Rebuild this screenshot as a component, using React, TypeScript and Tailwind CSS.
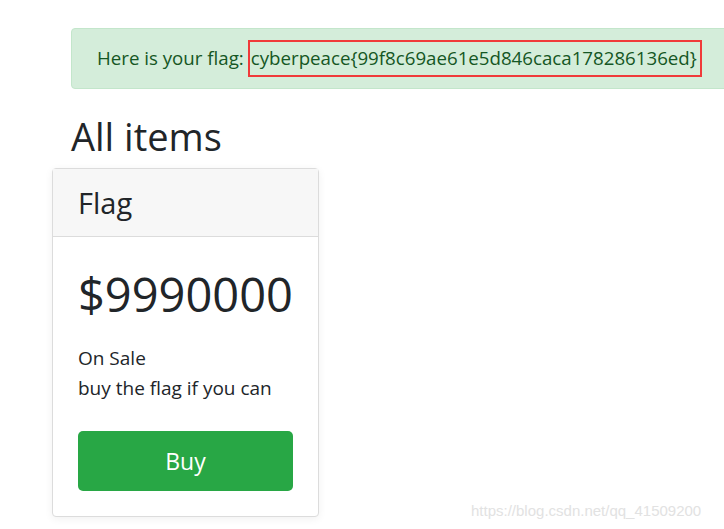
export default function App() {
  return (
    <div className="relative h-[529px] w-[724px] overflow-hidden bg-white font-['Open_Sans',sans-serif] text-[#212529]">
      <div className="pl-[71px] pt-[28px]">
        <div className="flex h-[61px] w-[700px] items-center rounded-[4px] border border-[#c3e6cb] bg-[#d4edda] pl-[25px] text-[18.7px] text-[#155724]">
          <span>Here is your flag:</span>
          <span className="ml-[4px] flex h-[37px] items-center border-2 border-[#f03a3a] pl-[1px] pr-[3px]">
            cyberpeace{"{"}99f8c69ae61e5d846caca178286136ed{"}"}
          </span>
        </div>
        <h2 className="mt-[24px] text-[38px] leading-[46px]">All items</h2>
      </div>
      <div className="ml-[52px] mt-[9px] w-[267px] rounded-[4px] border border-[#dcdcdc] bg-white shadow-[0_2px_8px_rgba(0,0,0,0.06)]">
        <div className="flex h-[68px] items-center border-b border-[#dcdcdc] bg-[#f7f7f7] px-[25px] text-[29px]">
          Flag
        </div>
        <div className="px-[25px] pb-[25px] pt-[29px]">
          <div className="text-[47px] leading-[56px]">$9990000</div>
          <div className="mt-[21px] text-[19px] leading-[30px]">
            <div>On Sale</div>
            <div>buy the flag if you can</div>
          </div>
          <button className="mt-[28px] flex h-[60px] w-full items-center justify-center rounded-[5px] bg-[#28a745] text-[23px] text-white">
            Buy
          </button>
        </div>
      </div>
      <div className="absolute left-[471px] top-[500px] font-['Liberation_Sans',sans-serif] text-[15px] text-[#e2e2e2]">
        https://blog.csdn.net/qq_41509200
      </div>
    </div>
  );
}
